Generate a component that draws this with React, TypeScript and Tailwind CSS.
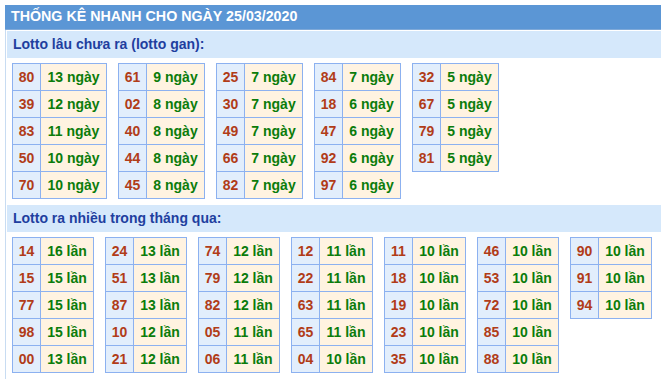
const GAN: [string, string][][] = [
  [["80", "13 ngày"], ["39", "12 ngày"], ["83", "11 ngày"], ["50", "10 ngày"], ["70", "10 ngày"]],
  [["61", "9 ngày"], ["02", "8 ngày"], ["40", "8 ngày"], ["44", "8 ngày"], ["45", "8 ngày"]],
  [["25", "7 ngày"], ["30", "7 ngày"], ["49", "7 ngày"], ["66", "7 ngày"], ["82", "7 ngày"]],
  [["84", "7 ngày"], ["18", "6 ngày"], ["47", "6 ngày"], ["92", "6 ngày"], ["97", "6 ngày"]],
  [["32", "5 ngày"], ["67", "5 ngày"], ["79", "5 ngày"], ["81", "5 ngày"]],
];

const NHIEU: [string, string][][] = [
  [["14", "16 lần"], ["15", "15 lần"], ["77", "15 lần"], ["98", "15 lần"], ["00", "13 lần"]],
  [["24", "13 lần"], ["51", "13 lần"], ["87", "13 lần"], ["10", "12 lần"], ["21", "12 lần"]],
  [["74", "12 lần"], ["79", "12 lần"], ["82", "12 lần"], ["05", "11 lần"], ["06", "11 lần"]],
  [["12", "11 lần"], ["22", "11 lần"], ["63", "11 lần"], ["65", "11 lần"], ["04", "10 lần"]],
  [["11", "10 lần"], ["18", "10 lần"], ["19", "10 lần"], ["23", "10 lần"], ["35", "10 lần"]],
  [["46", "10 lần"], ["53", "10 lần"], ["72", "10 lần"], ["85", "10 lần"], ["88", "10 lần"]],
  [["90", "10 lần"], ["91", "10 lần"], ["94", "10 lần"]],
];

function LottoTable({ rows, valueWidth }: { rows: [string, string][]; valueWidth: string }) {
  return (
    <div className="flex flex-col border-l border-t border-[#8cb1f0] self-start">
      {rows.map(([num, val]) => (
        <div key={num} className="flex h-[27px]">
          <div className="w-[28px] flex items-center justify-center bg-[#e2eefc] border-r border-b border-[#8cb1f0] text-[#b13c18]">
            {num}
          </div>
          <div
            className={`${valueWidth} flex items-center justify-center bg-[#fff3e1] border-r border-b border-[#8cb1f0] text-[#0b7c0b]`}
          >
            {val}
          </div>
        </div>
      ))}
    </div>
  );
}

function SectionTitle({ children }: { children: React.ReactNode }) {
  return (
    <div className="h-[27px] bg-[#d5e8fb] flex items-center pl-[6px] text-[14px] font-bold text-[#1f3f9f]">
      {children}
    </div>
  );
}

export default function App() {
  return (
    <div className="w-[661px] h-[379px] bg-white overflow-hidden pt-[5px] pl-[5px] font-['Liberation_Sans',Arial,sans-serif]">
      <div className="h-[25px] bg-[#5b96d5] border-b border-[#7fa9d8] flex items-center pl-[6px] text-[14.25px] font-bold text-white">
        THỐNG KÊ NHANH CHO NGÀY 25/03/2020
      </div>
      <div className="h-[400px] border-l border-[#c8dcf2] pl-px pt-px">
        <SectionTitle>Lotto lâu chưa ra (lotto gan):</SectionTitle>
        <div className="flex gap-[11px] pl-[5px] pt-[5px] text-[14px] font-bold">
          {GAN.map((rows, i) => (
            <LottoTable key={i} rows={rows} valueWidth={i === 0 ? "w-[66px]" : "w-[58px]"} />
          ))}
        </div>
        <div className="mt-[6px]">
          <SectionTitle>Lotto ra nhiều trong tháng qua:</SectionTitle>
        </div>
        <div className="flex gap-[11px] pl-[5px] pt-[5px] text-[14px] font-bold">
          {NHIEU.map((rows, i) => (
            <LottoTable key={i} rows={rows} valueWidth="w-[53px]" />
          ))}
        </div>
      </div>
    </div>
  );
}
